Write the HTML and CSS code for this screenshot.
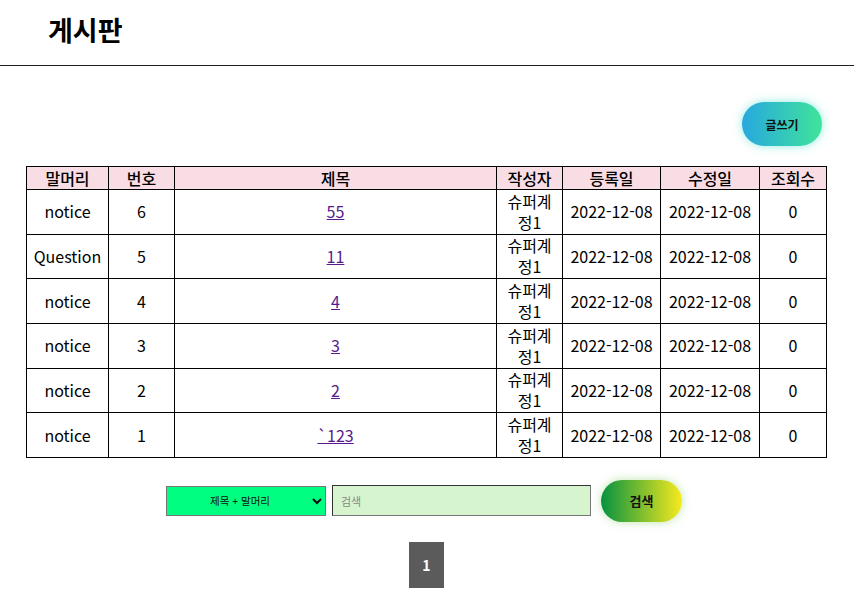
FILE: index.html
```html
<!DOCTYPE html>
<html lang="ko">
<head>
<meta charset="utf-8">
<title>게시판</title>
<link rel="stylesheet" href="styles.css">
</head>
<body>
<header class="site-header">
  <h1 class="title">게시판</h1>
</header>
<main class="board">
  <div class="actions">
    <button class="write-btn">글쓰기</button>
  </div>
  <table class="list">
    <colgroup>
      <col class="c-head"><col class="c-num"><col class="c-title"><col class="c-writer"><col class="c-date"><col class="c-date2"><col class="c-view">
    </colgroup>
    <thead>
      <tr><th>말머리</th><th>번호</th><th>제목</th><th>작성자</th><th>등록일</th><th>수정일</th><th>조회수</th></tr>
    </thead>
    <tbody>
      <tr><td>notice</td><td>6</td><td><a href="#">55</a></td><td>슈퍼계정1</td><td>2022-12-08</td><td>2022-12-08</td><td>0</td></tr>
      <tr><td>Question</td><td>5</td><td><a href="#">11</a></td><td>슈퍼계정1</td><td>2022-12-08</td><td>2022-12-08</td><td>0</td></tr>
      <tr><td>notice</td><td>4</td><td><a href="#">4</a></td><td>슈퍼계정1</td><td>2022-12-08</td><td>2022-12-08</td><td>0</td></tr>
      <tr><td>notice</td><td>3</td><td><a href="#">3</a></td><td>슈퍼계정1</td><td>2022-12-08</td><td>2022-12-08</td><td>0</td></tr>
      <tr><td>notice</td><td>2</td><td><a href="#">2</a></td><td>슈퍼계정1</td><td>2022-12-08</td><td>2022-12-08</td><td>0</td></tr>
      <tr><td>notice</td><td>1</td><td><a href="#">`123</a></td><td>슈퍼계정1</td><td>2022-12-08</td><td>2022-12-08</td><td>0</td></tr>
    </tbody>
  </table>
  <form class="search">
    <select class="search-type">
      <option>제목 + 말머리</option>
    </select>
    <input class="search-input" type="text" placeholder="검색">
    <button type="button" class="search-btn">검색</button>
  </form>
  <nav class="pager">
    <a class="page current" href="#">1</a>
  </nav>
</main>
</body>
</html>
```
FILE: styles.css
```css
* { box-sizing: border-box; }
html, body {
  margin: 0;
  padding: 0;
  background: #fff;
  font-family: "Noto Sans CJK KR", "Noto Sans", sans-serif;
  color: #000;
}
.site-header {
  height: 66px;
  border-bottom: 1px solid #222;
  display: flex;
  align-items: center;
  padding-left: 48px;
}
.title {
  margin: 0;
  font-size: 27px;
  font-weight: 700;
  line-height: 1;
  position: relative;
  top: -3px;
}
.board {
  padding: 36px 28px 0 26px;
}
.actions {
  display: flex;
  justify-content: flex-end;
  padding-right: 4px;
  margin-bottom: 20px;
}
.write-btn {
  width: 80px;
  height: 44px;
  border: none;
  border-radius: 22px;
  background: linear-gradient(90deg, #27a8df 0%, #3fe49a 100%);
  box-shadow: 0 0 10px rgba(60, 220, 200, 0.55);
  font-family: inherit;
  font-size: 12px;
  font-weight: 700;
  color: #111;
}
.list {
  width: 800px;
  border-collapse: collapse;
  table-layout: fixed;
  font-size: 16px;
  line-height: 21px;
}
.c-head { width: 82px; }
.c-num { width: 66px; }
.c-title { width: 322px; }
.c-writer { width: 66px; }
.c-date { width: 98px; }
.c-date2 { width: 99px; }
.c-view { width: 67px; }
.list th, .list td {
  border: 1px solid #000;
  text-align: center;
  padding: 0 4px;
  font-weight: 400;
}
.list th {
  background: #f8dde4;
  font-size: 16px;
  height: 23px;
  font-weight: 500;
  padding: 0 1px;
}
.list td {
  height: 44.67px;
}
.list a {
  color: #551a8b;
  text-decoration: underline;
}
.search {
  display: flex;
  align-items: center;
  justify-content: center;
  gap: 6px;
  margin-top: 22px;
  padding-right: 4px;
}
.search-type {
  width: 160px;
  height: 30px;
  background: #00ff80;
  border: 1px solid #777;
  font-family: inherit;
  font-size: 10.5px;
  text-align: center;
  text-align-last: center;
  color: #111;
}
.search-input {
  width: 259px;
  height: 31px;
  background: #d6f5cf;
  border: 1px solid #333;
  border-right-color: #777;
  border-bottom-color: #777;
  padding: 0 8px;
  font-family: inherit;
  font-size: 11px;
}
.search-input::placeholder { color: #888; }
.search-btn {
  margin-left: 4px;
  width: 81px;
  height: 42px;
  border: none;
  border-radius: 21px;
  background: linear-gradient(90deg, #05923f 0%, #f7ea1f 100%);
  box-shadow: 0 0 10px rgba(150, 210, 120, 0.6);
  font-family: inherit;
  font-size: 13px;
  font-weight: 700;
  color: #111;
}
.pager {
  display: flex;
  justify-content: center;
  margin-top: 20px;
  padding-left: 1px;
}
.page {
  display: flex;
  align-items: center;
  justify-content: center;
  width: 35px;
  height: 46px;
  background: #5b5b5b;
  color: #fff;
  font-size: 14px;
  font-weight: 700;
  text-decoration: none;
}
```
